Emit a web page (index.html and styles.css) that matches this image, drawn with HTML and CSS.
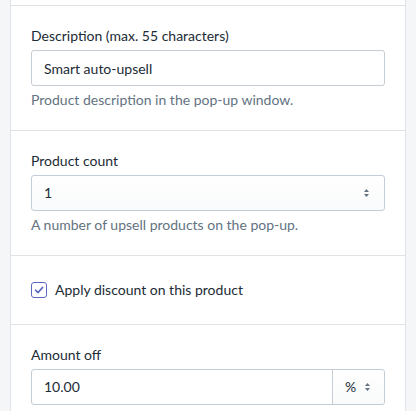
FILE: index.html
```html
<!DOCTYPE html>
<html lang="en">
<head>
<meta charset="utf-8">
<link rel="stylesheet" href="styles.css">
</head>
<body>
<div class="card">
  <div class="section section-top"></div>
  <div class="section">
    <label class="label" for="desc">Description (max. 55 characters)</label>
    <div class="field"><input id="desc" class="input" type="text" value="Smart auto-upsell"></div>
    <div class="help">Product description in the pop-up window.</div>
  </div>
  <div class="section">
    <div class="label">Product count</div>
    <div class="field select">
      <span class="value">1</span>
      <span class="arrows"><svg width="7" height="10" viewBox="0 0 7 10"><path d="M3.5 1 L6 4 H1 Z M3.5 9 L6 6 H1 Z" fill="#637381"/></svg></span>
    </div>
    <div class="help">A number of upsell products on the pop-up.</div>
  </div>
  <div class="section">
    <label class="choice">
      <span class="checkbox"><svg width="12" height="12" viewBox="0 0 12 12"><path d="M2.5 6.2 L5 8.6 L9.6 3.4" fill="none" stroke="#5c6ac4" stroke-width="1.6" stroke-linecap="round" stroke-linejoin="round"/></svg></span>
      <span class="choice-text">Apply discount on this product</span>
    </label>
  </div>
  <div class="section">
    <div class="label">Amount off</div>
    <div class="field connected">
      <span class="value grow">10.00</span>
      <span class="suffix">
        <span class="suffix-text">%</span>
        <span class="arrows"><svg width="7" height="10" viewBox="0 0 7 10"><path d="M3.5 1 L6 4 H1 Z M3.5 9 L6 6 H1 Z" fill="#637381"/></svg></span>
      </span>
    </div>
  </div>
</div>
</body>
</html>
```

FILE: styles.css
```css
* { box-sizing: border-box; }
html, body { margin: 0; padding: 0; }
body {
  background: #f4f6f8;
  font-family: "Lato", "Noto Sans", sans-serif;
  font-size: 14px;
  line-height: 20px;
  color: #212b36;
}
.card {
  margin-left: 10px;
  width: 396px;
  background: #fff;
  border-left: 1px solid #dfe3e8;
  border-right: 1px solid #dfe3e8;
  min-height: 411px;
}
.section {
  padding: 20px;
  border-bottom: 1px solid #dfe3e8;
}
.section:last-child { border-bottom: none; }
.section-top { padding: 0; height: 6px; }
.label {
  display: block;
  margin-bottom: 4px;
}
.field {
  height: 36px;
  border: 1px solid #c4cdd5;
  border-radius: 3px;
  display: flex;
  align-items: center;
  background: #fff;
}
.input {
  border: none;
  outline: none;
  width: 100%;
  height: 100%;
  padding: 0 12px;
  font: inherit;
  color: #212b36;
  background: transparent;
}
.value { padding: 0 12px; }
.grow { flex: 1; }
.select {
  justify-content: space-between;
  background: linear-gradient(180deg, #fff, #f9fafb);
}
.arrows {
  display: flex;
  align-items: center;
  padding-right: 14px;
}
.help {
  margin-top: 4px;
  color: #637381;
}
.choice {
  display: flex;
  align-items: center;
  padding: 4px 0;
}
.checkbox {
  width: 16px;
  height: 16px;
  border: 1px solid #5c6ac4;
  border-radius: 3px;
  display: flex;
  align-items: center;
  justify-content: center;
  margin-right: 8px;
}
.connected .suffix {
  height: 100%;
  width: 52px;
  border-left: 1px solid #c4cdd5;
  display: flex;
  align-items: center;
  justify-content: space-between;
  padding-left: 12px;
  background: linear-gradient(180deg, #fff, #f9fafb);
  border-radius: 0 3px 3px 0;
}
.suffix .arrows { padding-right: 13px; }
```
